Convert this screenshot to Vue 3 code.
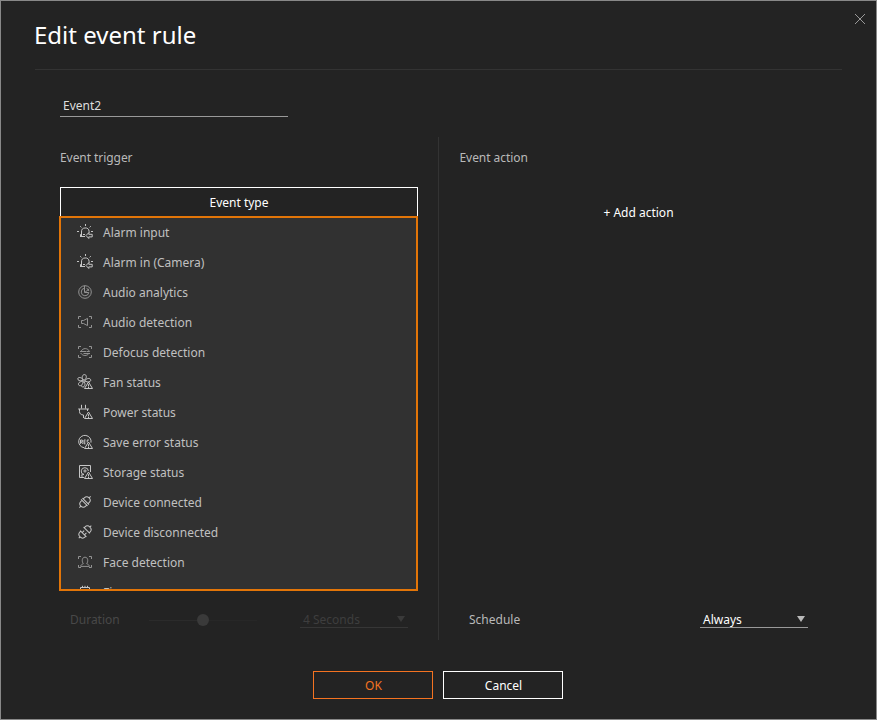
<script setup>
import { ref } from 'vue'

const name = ref('Event2')
const warn = '<path d="M11.5 8L15.5 14.5H7.5Z"/><path d="M11.5 10.2V12.4M11.5 12.9V14"/>'
const frame = '<path d="M4 2.5H1.5V5M12 2.5h2.5V5M1.5 11v2.5H4M14.5 11v2.5H12"/>'
const alarm = '<path d="M4.5 12.5V8a3.8 3.8 0 0 1 7.6-.5V9M3 12.5H8M3.5 12.5V10.5H5M6 10.5H8"/><path d="M8.5 0V2M3.2 2.2l1.2 1.2M13.8 2.2l-1.2 1.2M0 7.5h2M14 7.5h2M9 11.5l2.8-2.8v1.6h3.4v2.6h-3.4v1.6z"/>'

const triggers = [
  { label: 'Alarm input', icon: alarm },
  { label: 'Alarm in (Camera)', icon: alarm },
  { label: 'Audio analytics', dim: true, icon: '<circle cx="8" cy="8" r="6.3"/><path d="M7.5 4.2A3.8 3.8 0 1 0 11.8 8.5H7.5V1.8M8 8.3l4-3.3M9.5 4.3A4 4 0 0 1 11.9 7"/>' },
  { label: 'Audio detection', dim: true, icon: frame + '<path d="M4.5 6.5H6.5L10.5 4.4V11.6L6.5 9.5H4.5Z"/>' },
  { label: 'Defocus detection', dim: true, icon: frame + '<path d="M3 7.5H9.5M6.5 9.5H13M4 7.4C5 5.5 6.5 4.6 8.2 4.6c2 0 3.4 1.2 4.4 2.9M3.6 9C5 10.8 6.4 11.5 7.9 11.5c1.8 0 3.2-.8 4-2M10 7.5h2.6"/>' },
  { label: 'Fan status', icon: '<circle cx="7" cy="7" r="1.2"/><path d="M6.2 6C4.6 4 5 .7 7.4.6c2.5.1 2.5 3.2.4 5.4M8.2 6.5c1.4-2.4 4.9-2.7 5.5-.7.5 1.8-2 2.9-5.4 1.5M6 7.8C6 10.8 3.4 12.7 1.8 11.2.6 9.4 2.4 7.6 5.7 7.2M5.7 6.5C3 7.3.5 6.4.8 4.6 1.4 2.8 4.4 3.2 6.2 5.8M7.5 8.2C8.2 9.6 8.1 11.4 7 12.6c-1.2 1-2.5.4-2.4-1.2"/>' + warn },
  { label: 'Power status', icon: '<path d="M4.5 .8V4.5M8.5 .8V4.5M1.2 5H12M2.5 5v2.4C2.5 9.8 4 11 6.5 11M10.5 5V7M6.5 11v3"/>' + warn },
  { label: 'Save error status', icon: '<path d="M7 13.7A6.2 6.2 0 1 1 14 8.6"/><path d="M3.5 9.8V6H5.3V8H3.5M4.6 8l1 1.8M8.7 6H7v3.8h1.5M7 8h1.5M12 6H10.2V8.4"/>' + warn },
  { label: 'Storage status', icon: '<path d="M7.2 13.5H2.5V1.5H13.5V8"/><path d="M7 10.8A3.6 3.6 0 1 1 11.4 7M4.2 11.2l2.2-1.7M3.8 12h2.4"/><circle cx="8" cy="7" r="1.1"/>' + warn },
  { label: 'Device connected', icon: '<g transform="rotate(-45 8 8)"><path d="M7 4.6H5.6a3.4 3.4 0 0 0 0 6.8H7M7 3.4V12.6M9 3.4V12.6M9 4.6h1.4a3.4 3.4 0 0 1 0 6.8H9M0 8H2.2M13.8 8H16"/></g>' },
  { label: 'Device disconnected', icon: '<g transform="rotate(-45 8 8)"><path d="M5.6 3.6V12.4M5.6 4.4H4.6a3.6 3.6 0 0 0 0 7.2h1M10.4 3.6V12.4M10.4 4.4h1a3.6 3.6 0 0 1 0 7.2h-1M-.8 8H1.1M14.9 8h2M5.6 6.4h2.8M5.6 9.6h2.8"/></g>' },
  { label: 'Face detection', dim: true, icon: frame + '<path d="M6.3 9.7C4.7 7.7 4.7 3.2 8 3.2s3.3 4.5 1.7 6.5M6.3 9.7C5 10.4 3.8 10.7 3.7 12.4h8.6C12.2 10.7 11 10.4 9.7 9.7"/>' },
  { label: 'Fire', icon: '<path d="M3.5 6.3V3.5H12.5V6.3M5.5 1.8V3.5M8 1.8V3.5M10.5 1.8V3.5"/>' },
]
</script>

<template>
  <main class="dialog">
    <header class="head">
      <h1>Edit event rule</h1>
      <button class="close" aria-label="Close">
        <svg width="12" height="12" viewBox="0 0 12 12"><path d="M1 1L11 11M11 1L1 11" /></svg>
      </button>
    </header>
    <input v-model="name" class="name" aria-label="Rule name" />
    <div class="columns">
      <section class="trigger">
        <h2>Event trigger</h2>
        <button class="type">Event type</button>
        <ul class="list">
          <li v-for="t in triggers" :key="t.label">
            <svg class="icon" :class="{ dim: t.dim }" viewBox="0 0 16 16" v-html="t.icon"></svg>
            <span>{{ t.label }}</span>
          </li>
        </ul>
        <div class="duration">
          <span class="label">Duration</span>
          <div class="slider"><i class="track"></i><i class="knob"></i><i class="track rest"></i></div>
          <div class="select">
            <span>4 Seconds</span>
            <svg width="8" height="6" viewBox="0 0 8 6"><path d="M0 0H8L4 6Z" /></svg>
          </div>
        </div>
      </section>
      <section class="action">
        <h2>Event action</h2>
        <button class="add">+ Add action</button>
        <div class="schedule">
          <span>Schedule</span>
          <div class="select">
            <span>Always</span>
            <svg width="8" height="6" viewBox="0 0 8 6"><path d="M0 0H8L4 6Z" /></svg>
          </div>
        </div>
      </section>
    </div>
    <footer class="foot">
      <button class="ok">OK</button>
      <button>Cancel</button>
    </footer>
  </main>
</template>

<style>
body { background: #232323; }
</style>

<style scoped>
* { box-sizing: border-box; }
.dialog {
  width: 877px;
  height: 720px;
  border: 1px solid #888;
  background: #232323;
  color: #b9b9b9;
  font: 12px/18px "Noto Sans", sans-serif;
  display: flex;
  flex-direction: column;
}
button {
  font: inherit;
  color: #fff;
  background: none;
  border: 0;
  padding: 0;
}
h1, h2, ul { margin: 0; padding: 0; font-weight: 400; }
.head {
  height: 69px;
  margin: 0 34px;
  border-bottom: 1px solid #333;
  display: flex;
  justify-content: space-between;
  align-items: flex-start;
}
h1 {
  margin: 17px 0 0 -1px;
  color: #fff;
  font-size: 24px;
  line-height: 34px;
}
.close {
  margin: 12px -24px 0 0;
  width: 12px;
  height: 12px;
}
.close svg { display: block; fill: none; stroke: #999; stroke-width: 1; }
.name {
  width: 228px;
  height: 22px;
  margin: 25px 0 0 59px;
  padding: 0 3px;
  border: 0;
  border-bottom: 1px solid #999;
  background: none;
  color: #ddd;
  font: inherit;
  outline: 0;
}
.columns {
  height: 503px;
  margin: 20px 0 0 58px;
  display: flex;
}
h2 { font-size: 12px; line-height: 18px; letter-spacing: -0.06px; }
.trigger {
  width: 380px;
  border-right: 1px solid #333;
  padding: 12px 20px 0 0;
}
.trigger h2 { margin-left: 1px; }
.type {
  display: block;
  width: 358px;
  height: 29px;
  margin: 20px 0 0 1px;
  padding-top: 1px;
  border: 1px solid #fff;
  border-bottom: 0;
}
.list {
  height: 375px;
  border: 2px solid #e27508;
  background: #313131;
  list-style: none;
  overflow: hidden;
}
.list li {
  height: 30px;
  padding: 0 0 1px 16px;
  display: flex;
  align-items: center;
  gap: 10px;
  color: #c0c0c0;
}
.icon {
  width: 16px;
  height: 16px;
  margin-bottom: 1px;
  fill: none;
  stroke: #c6c6c6;
  stroke-width: 1;
  overflow: visible;
}
.icon.dim { stroke: #929292; }
.duration, .schedule {
  display: flex;
  align-items: center;
}
.duration {
  margin-top: 20px;
  padding-left: 11px;
  color: #484848;
}
.label { width: 79px; }
.slider { width: 108px; display: flex; align-items: center; }
.track { flex: 1; height: 1px; background: #2b2b2b; }
.rest { background: #272727; }
.knob { width: 12px; height: 12px; border-radius: 50%; background: #3a3a3a; }
.select {
  width: 108px;
  height: 18px;
  align-self: flex-start;
  margin-top: -1px;
  padding: 2px 3px 0;
  border-bottom: 1px solid #999;
  color: #fff;
  display: flex;
  align-items: center;
  justify-content: space-between;
}
.select svg { margin-bottom: 2px; fill: #b9b9b9; }
.duration .select {
  margin-left: 43px;
  border-color: #363636;
  color: #3e3e3e;
}
.duration .select svg { fill: #3a3a3a; }
.action {
  flex: 1;
  padding: 12px 0 0 20px;
  display: flex;
  flex-direction: column;
}
.action h2 { margin-left: 0.5px; }
.add {
  width: 359px;
  height: 18px;
  margin-top: 37px;
}
.schedule {
  margin-top: 389px;
  width: 349px;
  padding-left: 10px;
  justify-content: space-between;
}
.foot {
  margin: 31px 0 0 312px;
  display: flex;
  gap: 10px;
}
.foot button {
  width: 120px;
  height: 28px;
  padding: 1px 0 0 1px;
  border: 1px solid #fff;
}
.foot .ok { border-color: #f47321; color: #f47321; }
</style>
